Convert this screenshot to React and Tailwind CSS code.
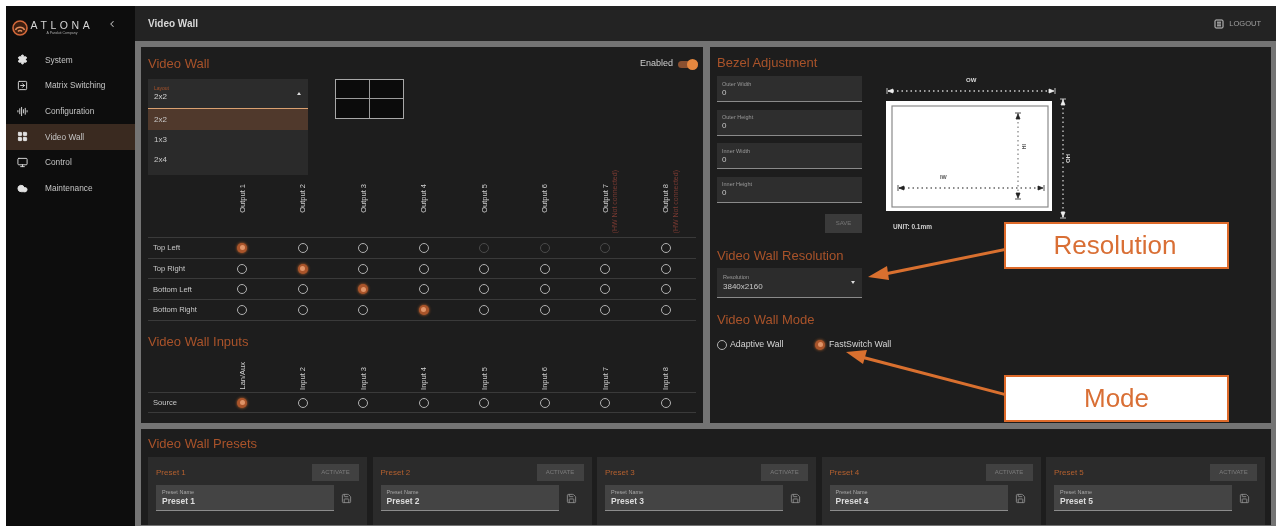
import React from "react";
import { Settings, Cloud, Monitor, LayoutGrid, Save, ChevronLeft, SquareArrowRight, AudioLines } from "lucide-react";

const OUT = ["Output 1","Output 2","Output 3","Output 4","Output 5","Output 6","Output 7","Output 8"];
const IN = ["Lan/Aux","Input 2","Input 3","Input 4","Input 5","Input 6","Input 7","Input 8"];

function Radio({ on, dim }) {
  if (on) return <span className="flex h-[10px] w-[10px] items-center justify-center rounded-full bg-[#a9542a] shadow-[0_0_3px_#c8682c]"><span className="h-[5px] w-[5px] rounded-full bg-[#e09468]" /></span>;
  return <span className={"block h-[10px] w-[10px] rounded-full border-[1.5px] " + (dim ? "border-[#4a4a4a]" : "border-[#b0b0b0]")} />;
}

function Head({ labels, red }) {
  return (
    <div className={"grid grid-cols-[64px_repeat(8,60.5px)] border-b border-[#3a3a3a] " + (red ? "h-[73px]" : "h-[43px]")}>
      <div />
      {labels.map((l, i) => (
        <div key={l} className={"relative flex items-end justify-center " + (red ? "pb-[24px]" : "pb-[2px]")}>
          <span className="rotate-180 text-[7.5px] leading-[9px] whitespace-nowrap text-[#d0d0d0] [writing-mode:vertical-rl]">{l}</span>
          {red && i > 5 ? <span className="absolute bottom-[4px] left-[36px] rotate-180 text-[7px] leading-[8px] whitespace-nowrap text-[#7a3a32] [writing-mode:vertical-rl]">(HW Not connected)</span> : null}
        </div>
      ))}
    </div>
  );
}

function Row({ label, on, dims = [] }) {
  return (
    <div className="grid h-[20.7px] grid-cols-[64px_repeat(8,60.5px)] items-center border-b border-[#3a3a3a]">
      <span className="pl-[5px] text-[7.6px] whitespace-nowrap text-[#c8c8c8]">{label}</span>
      {OUT.map((o, i) => (
        <div key={o} className="flex justify-center"><Radio on={i === on} dim={dims.includes(i)} /></div>
      ))}
    </div>
  );
}

function Field({ label, value }) {
  return (
    <div className="flex h-[26px] w-[145px] flex-col justify-center border-b border-[#8a8a8a] bg-[#2e2e2e] pl-[5px]">
      <span className="text-[5.5px] leading-[8px] text-[#9a9a9a]">{label}</span>
      <span className="text-[8px] leading-[10px] text-[#c8c8c8]">{value}</span>
    </div>
  );
}

function Nav({ icon, label, active }) {
  return (
    <div className={"flex h-[25.7px] items-center gap-[16px] pl-[9px] " + (active ? "bg-[#3a2a20]" : "")}>
      <span className="flex w-[14px] justify-center text-[#e2e2e2]">{icon}</span>
      <span className="text-[8.3px] text-[#c4c4c4]">{label}</span>
    </div>
  );
}

function Preset({ n }) {
  return (
    <div className="flex h-[68px] w-[219px] shrink-0 flex-col bg-[#2b2b2b] pl-[8px] pr-[8px] pt-[7px]">
      <div className="flex h-[17px] items-center justify-between">
        <span className="text-[8px] text-[#b4602f]">Preset {n}</span>
        <span className="flex h-[17px] w-[47px] items-center justify-center bg-[#414141] text-[6px] text-[#7c7c7c]">ACTIVATE</span>
      </div>
      <div className="mt-[4px] flex items-center justify-between">
        <div className="flex h-[26px] w-[178px] flex-col justify-center border-b border-[#8c8c8c] bg-[#444] pl-[6px]">
          <span className="text-[5.5px] leading-[7px] text-[#a8a8a8]">Preset Name</span>
          <span className="text-[8.5px] leading-[11px] font-bold text-[#dcdcdc]">Preset {n}</span>
        </div>
        <Save size={11} className="mr-[7px] text-[#8c8c8c]" />
      </div>
    </div>
  );
}

function Diagram() {
  return (
    <svg width="194" height="146" viewBox="0 0 194 146" className="ml-[18px] mt-[5px] shrink-0">
      <text x="86" y="7" fontSize="6" fontWeight="700" fill="#ddd" fontFamily="Liberation Sans">OW</text>
      <line x1="8" y1="16" x2="174" y2="16" stroke="#ccc" strokeWidth="1.3" strokeDasharray="1.5 3" />
      <path d="M7 13v6M8 16l5-2v4zM175 13v6M174 16l-5-2v4z" fill="#eee" stroke="#eee" strokeWidth=".8" />
      <rect x="6" y="26" width="166" height="110" fill="#fff" />
      <rect x="12" y="31" width="156" height="101" fill="#fff" stroke="#8a8a8a" strokeWidth="1.2" />
      <text x="60" y="104" fontSize="5.5" fontWeight="700" fill="#555" fontFamily="Liberation Sans">IW</text>
      <line x1="19" y1="113" x2="163" y2="113" stroke="#666" strokeWidth="1.3" strokeDasharray="1.5 3" />
      <path d="M18 110v6M19 113l5-2v4zM164 110v6M163 113l-5-2v4z" fill="#222" stroke="#222" strokeWidth=".8" />
      <line x1="138" y1="38" x2="138" y2="124" stroke="#888" strokeWidth="1.3" strokeDasharray="1.5 3" />
      <path d="M135 38h6M138 39l-2 5h4zM135 124h6M138 123l-2-5h4z" fill="#222" stroke="#222" strokeWidth=".8" />
      <text x="142" y="69" fontSize="5.5" fontWeight="700" fill="#555" fontFamily="Liberation Sans" transform="rotate(90 142 69)">IH</text>
      <line x1="183" y1="24" x2="183" y2="143" stroke="#ccc" strokeWidth="1.3" strokeDasharray="1.5 3" />
      <path d="M180 24h6M183 25l-2 5h4zM180 143h6M183 142l-2-5h4z" fill="#eee" stroke="#eee" strokeWidth=".8" />
      <text x="186" y="79" fontSize="6" fontWeight="700" fill="#ddd" fontFamily="Liberation Sans" transform="rotate(90 186 79)">HO</text>
    </svg>
  );
}

export default function App() {
  return (
    <div className="h-[526px] w-[1278px] overflow-hidden bg-white pl-[6px] pr-[2px] pt-[6px] font-['Liberation_Sans',sans-serif] blur-[0.6px]">
      <div className="flex h-[520px]">
        {/* sidebar */}
        <aside className="flex w-[129px] shrink-0 flex-col bg-[#0d0d0d]">
          <div className="flex h-[36px] items-center pl-[6px] pt-[8px]">
            <svg width="16" height="16" viewBox="0 0 16 16" fill="none">
              <circle cx="8" cy="8" r="7" fill="#3c1e10" stroke="#d2683a" strokeWidth="1.6" />
              <path d="M3.4 10a5.2 5.2 0 0 1 9.2 0M6 11.5a2.6 2.6 0 0 1 4 0" stroke="#e08a5a" strokeWidth="1.6" />
            </svg>
            <div className="flex w-[68px] flex-col items-center">
              <span className="text-[10.5px] leading-[11px] tracking-[3.6px] text-[#d5d5d5]">ATLONA</span>
              <span className="text-[3.5px] leading-[5px] text-[#aaa]">A Panduit Company</span>
            </div>
            <ChevronLeft size={10} strokeWidth={2.5} className="ml-[11px] -mt-[9px] text-[#bbb]" />
          </div>
          <nav className="mt-[5px] flex flex-col">
            <Nav label="System" icon={<Settings size={11} fill="#e2e2e2" />} />
            <Nav label="Matrix Switching" icon={<SquareArrowRight size={11} />} />
            <Nav label="Configuration" icon={<AudioLines size={11} />} />
            <Nav active label="Video Wall" icon={<LayoutGrid size={11} fill="#e2e2e2" />} />
            <Nav label="Control" icon={<Monitor size={11} />} />
            <Nav label="Maintenance" icon={<Cloud size={11} fill="#e2e2e2" />} />
          </nav>
        </aside>
        {/* main */}
        <div className="flex min-w-0 flex-1 flex-col bg-[#747474]">
          <header className="flex h-[35px] shrink-0 items-center justify-between bg-[#232323] pl-[13px] pr-[15px]">
            <span className="text-[10px] font-bold text-[#d8d8d8]">Video Wall</span>
            <span className="flex items-center gap-[5px] text-[7.5px] text-[#a0a0a0]">
              <svg width="10" height="10" viewBox="0 0 10 10" fill="none" stroke="#ccc"><rect x="1" y="1" width="8" height="8" rx="1" /><path d="M3 5h4M3 3.2h4M3 6.8h4" /></svg>
              LOGOUT
            </span>
          </header>
          <div className="flex flex-1 flex-col gap-[6px] pb-[2px] pl-[6px] pr-[5px] pt-[6px]">
            <div className="flex h-[376px] shrink-0 gap-[7px]">
              {/* video wall */}
              <section className="w-[562px] bg-[#1d1d1d] px-[7px] pt-[9px]">
                <div className="flex items-center justify-between">
                  <h2 className="text-[13px] leading-[16px] text-[#a9532a]">Video Wall</h2>
                  <div className="-mr-[2px] flex items-center gap-[5px]">
                    <span className="text-[9px] text-[#cfcfcf]">Enabled</span>
                    <span className="relative block h-[7px] w-[20px] rounded-full bg-[#8a5030]"><span className="absolute -top-[2px] right-0 h-[11px] w-[11px] rounded-full bg-[#e5873f]" /></span>
                  </div>
                </div>
                <div className="mt-[7px] flex h-[86px] items-start">
                  <div className="relative w-[160px]">
                    <div className="flex h-[30px] items-center justify-between border-b border-[#d9a070] bg-[#2c2c2c] pl-[6px] pr-[7px]">
                      <div className="flex flex-col">
                        <span className="text-[5px] leading-[7px] text-[#a9532a]">Layout</span>
                        <span className="text-[8px] leading-[10px] text-[#d5d5d5]">2x2</span>
                      </div>
                      <span className="h-0 w-0 border-x-[2.5px] border-b-[3px] border-x-transparent border-b-[#ddd]" />
                    </div>
                    <div className="absolute left-0 top-[30px] z-10 flex h-[66px] w-full flex-col bg-[#2a2a2a] text-[8px] text-[#c8c8c8]">
                      <span className="flex h-[21px] items-center bg-[#50392c] pl-[6px]">2x2</span>
                      <span className="flex h-[20px] items-center pl-[6px]">1x3</span>
                      <span className="flex h-[20px] items-center pl-[6px]">2x4</span>
                    </div>
                  </div>
                  <div className="ml-[27px] grid h-[40px] w-[69px] grid-cols-2 grid-rows-2 border-[1.5px] border-[#a8a8a8] bg-[#0b0b0b]">
                    <div className="border-b border-r border-[#9a9a9a]" />
                    <div className="border-b border-[#9a9a9a]" />
                    <div className="border-r border-[#9a9a9a]" />
                    <div />
                  </div>
                </div>
                <Head labels={OUT} red />
                <Row label="Top Left" on={0} dims={[4, 5, 6]} />
                <Row label="Top Right" on={1} />
                <Row label="Bottom Left" on={2} />
                <Row label="Bottom Right" on={3} />
                <h2 className="mt-[13px] text-[13px] leading-[16px] text-[#a9532a]">Video Wall Inputs</h2>
                <Head labels={IN} />
                <Row label="Source" on={0} />
              </section>
              {/* right */}
              <section className="relative flex-1 bg-[#1d1d1d] px-[7px] pt-[8px]">
                <h2 className="text-[13px] leading-[15px] text-[#a9532a]">Bezel Adjustment</h2>
                <div className="flex">
                  <div className="mt-[6px] flex w-[145px] flex-col gap-[7.5px]">
                    <Field label="Outer Width" value="0" />
                    <Field label="Outer Height" value="0" />
                    <Field label="Inner Width" value="0" />
                    <Field label="Inner Height" value="0" />
                    <div className="flex justify-end">
                      <span className="mt-[4px] flex h-[19px] w-[37px] items-center justify-center bg-[#3a3a3a] text-[6px] text-[#777]">SAVE</span>
                    </div>
                  </div>
                  <div className="flex flex-col">
                    <Diagram />
                    <span className="ml-[31px] mt-[1px] text-[6.5px] font-bold text-[#d0d0d0]">UNIT: 0.1mm</span>
                  </div>
                </div>
                <h2 className="mt-[15px] text-[13px] leading-[16px] text-[#a9532a]">Video Wall Resolution</h2>
                <div className="mt-[4px] flex h-[30px] w-[145px] items-center justify-between border-b border-[#8a8a8a] bg-[#2c2c2c] pl-[6px] pr-[7px]">
                  <div className="flex flex-col">
                    <span className="text-[5.5px] leading-[8px] text-[#9a9a9a]">Resolution</span>
                    <span className="text-[8px] leading-[11px] text-[#c8c8c8]">3840x2160</span>
                  </div>
                  <span className="h-0 w-0 border-x-[2.5px] border-t-[3px] border-x-transparent border-t-[#ddd]" />
                </div>
                <h2 className="mt-[14px] text-[13px] leading-[16px] text-[#a9532a]">Video Wall Mode</h2>
                <div className="mt-[10px] flex items-center text-[8.8px] text-[#d6d6d6]">
                  <Radio /><span className="ml-[3px] w-[87px]">Adaptive Wall</span>
                  <span className="-ml-[2px]"><Radio on /></span><span className="ml-[4px]">FastSwitch Wall</span>
                </div>
                {/* callouts */}
                <div className="absolute left-[294px] top-[175px] flex h-[47px] w-[225px] items-center justify-center border-2 border-[#de6a2a] bg-white pr-[3px] text-[26px] text-[#d96f35]">Resolution</div>
                <div className="absolute left-[294px] top-[328px] flex h-[47px] w-[225px] items-center justify-center border-2 border-[#de6a2a] bg-white text-[26px] text-[#d96f35]">Mode</div>
                <svg className="pointer-events-none absolute left-0 top-0" width="560" height="376" viewBox="0 0 560 376" fill="#d9702f" stroke="none">
                  <path d="M295 201 L172 226 L173 229 L295 204Z" />
                  <path d="M158 230 L177 219 L179 233Z" />
                  <path d="M295 346 L150 308 L149 311 L295 349Z" />
                  <path d="M136 305 L157 303 L153 317Z" />
                </svg>
              </section>
            </div>
            {/* presets */}
            <section className="flex min-h-0 flex-1 flex-col overflow-hidden bg-[#1d1d1d] px-[7px] pt-[7px]">
              <h2 className="text-[13px] leading-[16px] text-[#a9532a]">Video Wall Presets</h2>
              <div className="mt-[5px] flex gap-[5.5px]">
                {[1, 2, 3, 4, 5].map((n) => <Preset key={n} n={n} />)}
              </div>
            </section>
          </div>
        </div>
      </div>
    </div>
  );
}
